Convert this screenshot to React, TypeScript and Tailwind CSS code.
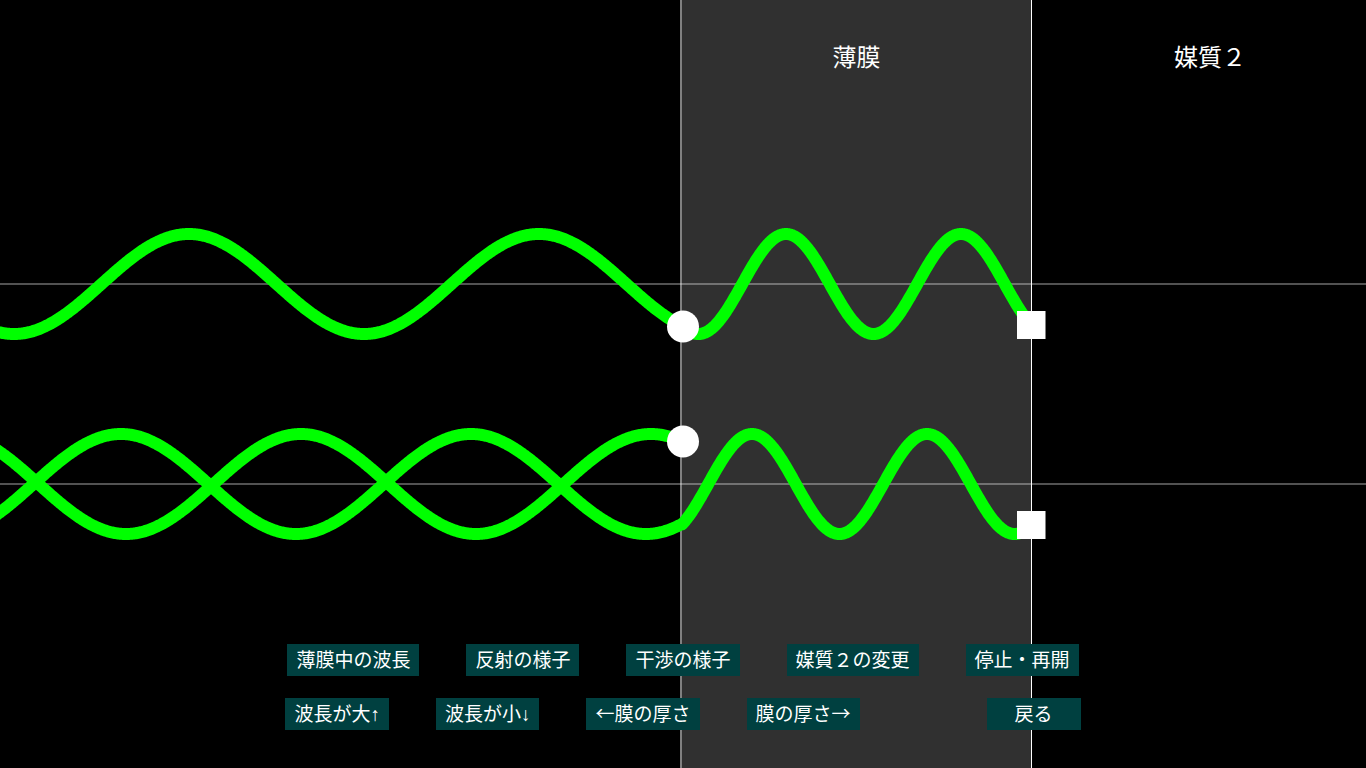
import React, { useState } from 'react';

interface WaveSegment {
  from: number;
  to: number;
  axis: number;
  peak: number;
  wavelength: number;
}

const AMPLITUDE = 50;

// incident light on the upper axis
const INCIDENT: WaveSegment[] = [
  { from: -6, to: 682, axis: 284, peak: 189, wavelength: 350 },
  { from: 682, to: 1031, axis: 284, peak: 786, wavelength: 175 },
];

// light reflected at the film surface
const FRONT: WaveSegment[] = [
  { from: -6, to: 682, axis: 484, peak: 301, wavelength: 350 },
];

// light reflected at the back of the film, coming out again
const BACK: WaveSegment[] = [
  { from: -6, to: 682, axis: 484, peak: 121, wavelength: 350 },
  { from: 682, to: 1031, axis: 484, peak: 752, wavelength: 175 },
];

const toPoints = (segments: WaveSegment[]) => {
  const points: string[] = [];
  segments.forEach(({ from, to, axis, peak, wavelength }) => {
    for (let x = from; x <= to; x += 1) {
      const y = axis - AMPLITUDE * Math.cos((2 * Math.PI * (x - peak)) / wavelength);
      points.push(`${x},${y.toFixed(2)}`);
    }
  });
  return points.join(' ');
};

interface ControlProps {
  children: React.ReactNode;
  className?: string;
  onClick?: () => void;
}

const Control: React.FC<ControlProps> = ({ children, className = 'px-[9px]', onClick }) => (
  <button
    type="button"
    onClick={onClick}
    className={`h-8 whitespace-nowrap bg-[#004040] pb-0.5 text-[19px] leading-[30px] text-white hover:bg-[#006060] ${className}`}
  >
    {children}
  </button>
);

// vertical arrows are set half-width
const HalfArrow: React.FC<{ arrow: string }> = ({ arrow }) => (
  <span className="font-['Liberation_Sans',sans-serif]">{arrow}</span>
);

const App: React.FC = () => {
  const [showReflection, setShowReflection] = useState(true);

  return (
    <main className="grid min-h-screen bg-black font-['Noto_Sans_CJK_JP',sans-serif] text-white">
      <div className="col-start-1 row-start-1 grid grid-cols-[680fr_352fr_334fr] text-2xl leading-8">
        <div />
        <h2 className="border-r border-l-2 border-l-[#808080] border-r-white bg-[#303030] pt-10 text-center">薄膜</h2>
        <h2 className="pt-10 pl-[22px] text-center">媒質２</h2>
      </div>

      <svg
        viewBox="0 0 1366 768"
        preserveAspectRatio="none"
        className="col-start-1 row-start-1 h-full w-full"
        role="img"
        aria-label="薄膜の干渉"
      >
        <g stroke="#ffffff" strokeOpacity="0.32" strokeWidth="2">
          <line x1="0" y1="284" x2="1366" y2="284" />
          <line x1="0" y1="484" x2="1366" y2="484" />
        </g>
        <g fill="none" stroke="#00ff00" strokeWidth="12" strokeLinejoin="round">
          <polyline points={toPoints(INCIDENT)} />
          {showReflection && <polyline points={toPoints(FRONT)} />}
          {showReflection && <polyline points={toPoints(BACK)} />}
        </g>
        <g fill="#ffffff">
          <circle cx="683" cy="326.5" r="16" />
          <circle cx="683" cy="441.5" r="16" />
          <rect x="1017" y="311" width="28.5" height="28" />
          <rect x="1017" y="511" width="28.5" height="28" />
        </g>
      </svg>

      <div className="z-10 col-start-1 row-start-1 flex flex-col items-center gap-[22px] self-end pb-[38px]">
        <div className="flex gap-[47px]">
          <Control>薄膜中の波長</Control>
          <Control onClick={() => setShowReflection(prev => !prev)}>反射の様子</Control>
          <Control>干渉の様子</Control>
          <Control>媒質２の変更</Control>
          <Control>停止・再開</Control>
        </div>
        <div className="flex gap-[47px]">
          <Control>波長が大<HalfArrow arrow="↑" /></Control>
          <Control>波長が小<HalfArrow arrow="↓" /></Control>
          <Control>←膜の厚さ</Control>
          <Control>膜の厚さ→</Control>
          <Control className="ml-20 px-7">戻る</Control>
        </div>
      </div>
    </main>
  );
};

export default App;
